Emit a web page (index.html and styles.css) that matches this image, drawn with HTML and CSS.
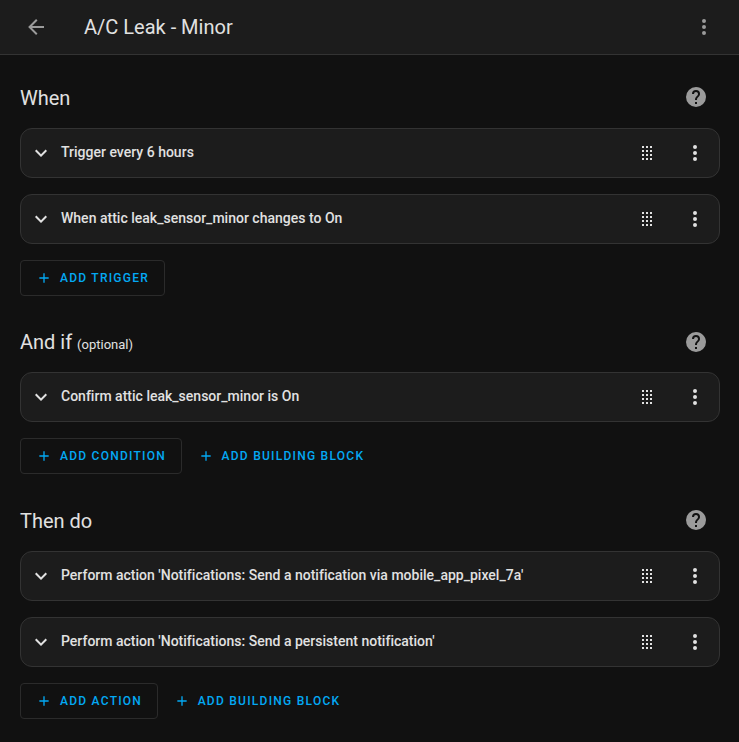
FILE: index.html
```html
<!DOCTYPE html>
<html lang="en">
<head>
<meta charset="utf-8">
<title>A/C Leak - Minor</title>
<link rel="stylesheet" href="styles.css">
</head>
<body>
<svg class="defs" aria-hidden="true">
  <symbol id="back" viewBox="0 0 24 24"><path d="M20,11V13H8L13.5,18.5L12.08,19.92L4.16,12L12.08,4.08L13.5,5.5L8,11H20Z"/></symbol>
  <symbol id="dots" viewBox="0 0 24 24"><path d="M12,16A2,2 0 0,1 14,18A2,2 0 0,1 12,20A2,2 0 0,1 10,18A2,2 0 0,1 12,16M12,10A2,2 0 0,1 14,12A2,2 0 0,1 12,14A2,2 0 0,1 10,12A2,2 0 0,1 12,10M12,4A2,2 0 0,1 14,6A2,2 0 0,1 12,8A2,2 0 0,1 10,6A2,2 0 0,1 12,4Z"/></symbol>
  <symbol id="help" viewBox="0 0 24 24"><path d="M15.07,11.25L14.17,12.17C13.45,12.89 13,13.5 13,15H11V14.5C11,13.39 11.45,12.39 12.17,11.67L13.41,10.41C13.78,10.05 14,9.55 14,9C14,7.89 13.1,7 12,7A2,2 0 0,0 10,9H8A4,4 0 0,1 12,5A4,4 0 0,1 16,9C16,9.88 15.64,10.67 15.07,11.25M13,19H11V17H13M12,2A10,10 0 0,0 2,12A10,10 0 0,0 12,22A10,10 0 0,0 22,12C22,6.47 17.5,2 12,2Z"/></symbol>
  <symbol id="chevron" viewBox="0 0 24 24"><path d="M7.41,8.58L12,13.17L16.59,8.58L18,10L12,16L6,10L7.41,8.58Z"/></symbol>
  <symbol id="plus" viewBox="0 0 24 24"><path d="M19,13H13V19H11V13H5V11H11V5H13V11H19V13Z"/></symbol>
  <symbol id="grip" viewBox="0 0 24 24"><path d="M7,5h2v2h-2zM11,5h2v2h-2zM15,5h2v2h-2zM7,9h2v2h-2zM11,9h2v2h-2zM15,9h2v2h-2zM7,13h2v2h-2zM11,13h2v2h-2zM15,13h2v2h-2zM7,17h2v2h-2zM11,17h2v2h-2zM15,17h2v2h-2z"/></symbol>
</svg>
<header class="toolbar">
  <svg class="icon"><use href="#back"/></svg>
  <h1>A/C Leak - Minor</h1>
  <svg class="icon"><use href="#dots"/></svg>
</header>
<main>
  <section>
    <div class="heading"><h2>When</h2><svg class="icon"><use href="#help"/></svg></div>
    <div class="row"><svg class="icon chevron"><use href="#chevron"/></svg><h3>Trigger every 6 hours</h3><svg class="icon"><use href="#grip"/></svg><svg class="icon"><use href="#dots"/></svg></div>
    <div class="row"><svg class="icon chevron"><use href="#chevron"/></svg><h3>When attic leak_sensor_minor changes to On</h3><svg class="icon"><use href="#grip"/></svg><svg class="icon"><use href="#dots"/></svg></div>
    <div class="buttons"><button class="outlined"><svg><use href="#plus"/></svg>Add trigger</button></div>
  </section>
  <section class="conditions">
    <div class="heading"><h2>And if <small>(optional)</small></h2><svg class="icon"><use href="#help"/></svg></div>
    <div class="row"><svg class="icon chevron"><use href="#chevron"/></svg><h3>Confirm attic leak_sensor_minor is On</h3><svg class="icon"><use href="#grip"/></svg><svg class="icon"><use href="#dots"/></svg></div>
    <div class="buttons"><button class="outlined"><svg><use href="#plus"/></svg>Add condition</button><button><svg><use href="#plus"/></svg>Add building block</button></div>
  </section>
  <section>
    <div class="heading"><h2>Then do</h2><svg class="icon"><use href="#help"/></svg></div>
    <div class="row"><svg class="icon chevron"><use href="#chevron"/></svg><h3>Perform action 'Notifications: Send a notification via mobile_app_pixel_7a'</h3><svg class="icon"><use href="#grip"/></svg><svg class="icon"><use href="#dots"/></svg></div>
    <div class="row"><svg class="icon chevron"><use href="#chevron"/></svg><h3>Perform action 'Notifications: Send a persistent notification'</h3><svg class="icon"><use href="#grip"/></svg><svg class="icon"><use href="#dots"/></svg></div>
    <div class="buttons"><button class="outlined"><svg><use href="#plus"/></svg>Add action</button><button><svg><use href="#plus"/></svg>Add building block</button></div>
  </section>
</main>
</body>
</html>
```
FILE: styles.css
```css
* { box-sizing: border-box; }
body { margin: 0; height: 742px; overflow: hidden; background: #111; color: #e1e1e1; font-family: Roboto, sans-serif; }
h1, h2, h3 { margin: 0; font-weight: 400; }
.defs { display: none; }
svg { flex: none; fill: currentColor; }
.icon { width: 24px; height: 24px; }
.toolbar { display: flex; align-items: center; height: 55px; padding: 0 23px 0 24px; background: #1c1c1c; border-bottom: 1px solid #333; }
.toolbar .icon { color: #9b9b9b; }
.toolbar h1 { flex: 1; margin-left: 36px; font-size: 20px; line-height: 28px; }
main { padding: 18px 19px 0 20px; }
section { height: 244px; }
section.conditions { height: 179px; }
.heading { display: flex; align-items: center; height: 48px; margin-bottom: 7px; padding-right: 12px; }
.conditions .heading { height: 50px; margin-bottom: 5px; }
.heading h2 { flex: 1; padding-top: 2px; font-size: 20px; line-height: 28px; }
.heading small { font-size: 13px; }
.heading .icon { color: #9b9b9b; }
.row { display: flex; align-items: center; height: 50px; margin-bottom: 16px; padding: 0 12px 0 8px; background: #1c1c1c; border: 1px solid #333; border-radius: 12px; }
.row h3 { flex: 1; margin-left: 8px; padding-bottom: 2px; font-size: 14px; font-weight: 500; line-height: 20px; letter-spacing: 0.01px; }
.row .icon + .icon { margin-left: 24px; }
.buttons { display: flex; gap: 8px; }
button { display: flex; align-items: center; height: 36px; padding: 0 8px; border: 0; background: none; color: #03a9f4; font: 500 12px Roboto, sans-serif; letter-spacing: 1.25px; text-transform: uppercase; }
button.outlined { padding: 0 14.5px 0 15px; border: 1px solid #2b2b2b; border-radius: 4px; }
button svg { width: 16px; height: 16px; margin-right: 8px; }
```
